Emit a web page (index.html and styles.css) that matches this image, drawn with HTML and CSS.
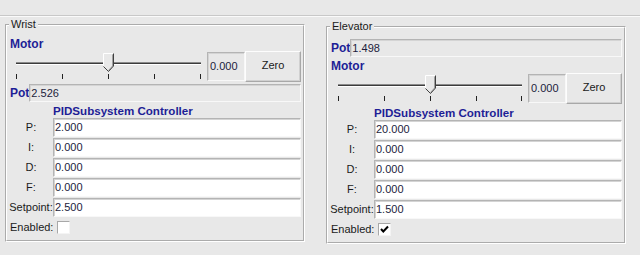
FILE: index.html
```html
<!DOCTYPE html>
<html>
<head>
<meta charset="utf-8">
<link rel="stylesheet" href="styles.css">
</head>
<body>
<div class="topbar"></div>
<div class="panels">
  <fieldset class="group">
    <legend>Wrist</legend>
    <div class="motor">Motor</div>
    <div class="slider-row">
      <svg class="slider" width="198" height="31" viewBox="0 0 198 31">
        <rect x="7" y="11" width="185" height="1" fill="#8a8a8a"/>
        <rect x="7" y="12" width="185" height="1" fill="#3c3c3c"/>
        <rect x="7" y="13" width="185" height="1" fill="#ffffff"/>
        <rect x="7" y="23" width="1" height="5" fill="#222"/>
        <rect x="53" y="23" width="1" height="5" fill="#222"/>
        <rect x="99" y="23" width="1" height="5" fill="#222"/>
        <rect x="145" y="23" width="1" height="5" fill="#222"/>
        <rect x="191" y="23" width="1" height="5" fill="#222"/>
        <polygon points="94.5,2.5 104.5,2.5 104.5,15 99.5,20.5 94.5,15" fill="#e8e8e8"/>
        <polyline points="94.5,15 94.5,2.5 104.5,2.5" fill="none" stroke="#ffffff" stroke-width="1"/>
        <polyline points="103.5,3.5 103.5,15 99.5,19.5" fill="none" stroke="#a0a0a0" stroke-width="1"/>
        <polyline points="104.5,2.5 104.5,15 99.5,20.5 94.5,15.5" fill="none" stroke="#404040" stroke-width="1"/>
      </svg>
      <div class="readout">0.000</div>
      <button class="zero-btn">Zero</button>
    </div>
    <div class="pot"><span class="pot-label">Pot</span><div class="field field-ro">2.526</div></div>
    <div class="pid-title">PIDSubsystem Controller</div>
    <div class="row"><span class="row-label">P:</span><div class="field">2.000</div></div>
    <div class="row"><span class="row-label">I:</span><div class="field">0.000</div></div>
    <div class="row"><span class="row-label">D:</span><div class="field">0.000</div></div>
    <div class="row"><span class="row-label">F:</span><div class="field">0.000</div></div>
    <div class="row"><span class="row-label">Setpoint:</span><div class="field">2.500</div></div>
    <div class="enabled"><span>Enabled:</span><span class="checkbox"></span></div>
  </fieldset>

  <fieldset class="group group-elevator">
    <legend>Elevator</legend>
    <div class="pot"><span class="pot-label">Pot</span><div class="field field-ro">1.498</div></div>
    <div class="motor">Motor</div>
    <div class="slider-row">
      <svg class="slider" width="198" height="31" viewBox="0 0 198 31">
        <rect x="8" y="11" width="184" height="1" fill="#8a8a8a"/>
        <rect x="8" y="12" width="184" height="1" fill="#3c3c3c"/>
        <rect x="8" y="13" width="184" height="1" fill="#ffffff"/>
        <rect x="8" y="23" width="1" height="5" fill="#222"/>
        <rect x="54" y="23" width="1" height="5" fill="#222"/>
        <rect x="100" y="23" width="1" height="5" fill="#222"/>
        <rect x="146" y="23" width="1" height="5" fill="#222"/>
        <rect x="191" y="23" width="1" height="5" fill="#222"/>
        <polygon points="95.5,2.5 105.5,2.5 105.5,15 100.5,20.5 95.5,15" fill="#e8e8e8"/>
        <polyline points="95.5,15 95.5,2.5 105.5,2.5" fill="none" stroke="#ffffff" stroke-width="1"/>
        <polyline points="104.5,3.5 104.5,15 100.5,19.5" fill="none" stroke="#a0a0a0" stroke-width="1"/>
        <polyline points="105.5,2.5 105.5,15 100.5,20.5 95.5,15.5" fill="none" stroke="#404040" stroke-width="1"/>
      </svg>
      <div class="readout">0.000</div>
      <button class="zero-btn">Zero</button>
    </div>
    <div class="pid-title">PIDSubsystem Controller</div>
    <div class="row"><span class="row-label">P:</span><div class="field">20.000</div></div>
    <div class="row"><span class="row-label">I:</span><div class="field">0.000</div></div>
    <div class="row"><span class="row-label">D:</span><div class="field">0.000</div></div>
    <div class="row"><span class="row-label">F:</span><div class="field">0.000</div></div>
    <div class="row"><span class="row-label">Setpoint:</span><div class="field">1.500</div></div>
    <div class="enabled"><span>Enabled:</span><span class="checkbox"><svg width="11" height="11" viewBox="0 0 11 11"><polyline points="2,5 4.3,7.5 9,2.5" fill="none" stroke="#000" stroke-width="2"/></svg></span></div>
  </fieldset>
</div>
</body>
</html>
```
FILE: styles.css
```css
html, body {
  margin: 0;
  padding: 0;
}
body {
  background: #e8e8e8;
  font-family: "Liberation Sans", Arial, sans-serif;
  font-size: 11px;
  line-height: 13px;
  color: #1a1a1a;
  width: 640px;
  height: 255px;
  overflow: hidden;
}
.topbar {
  height: 15px;
  border-bottom: 1px solid #c8c8c8;
  box-shadow: 0 1px 0 #fafafa;
}
.panels {
  display: flex;
  align-items: flex-start;
  gap: 21px;
  padding: 2px 0 0 5px;
}
.group {
  box-sizing: border-box;
  width: 300px;
  min-width: 0;
  margin: 0;
  padding: 6px 2px 4px 2px;
  border: 2px groove #ffffff;
}
.group-elevator {
  margin-top: 2px;
}
.group legend {
  padding: 0 2px;
  line-height: 13px;
  color: #1a1a1a;
}
.motor {
  height: 14px;
  line-height: 14px;
  padding-left: 1px;
  margin-top: 2px;
  font-size: 12px;
  font-weight: bold;
  color: #1e1e96;
}
.group legend + div {
  margin-top: 0;
}
.slider-row {
  display: flex;
  align-items: center;
  height: 31px;
}
.slider {
  flex: none;
  display: block;
}
.readout {
  box-sizing: border-box;
  width: 38px;
  height: 29px;
  border: 1px solid;
  border-color: #b4b4b4 #f8f8f8 #f8f8f8 #b4b4b4;
  box-shadow: inset 1px 1px 0 #d4d4d4;
  padding-left: 2px;
  line-height: 27px;
  color: #1c1c3c;
  background: #e8e8e8;
}
.zero-btn {
  flex: 1;
  box-sizing: border-box;
  height: 31px;
  margin: 0;
  padding: 0 0 2px 0;
  font: inherit;
  color: #1a1a1a;
  background: #e8e8e8;
  border: 1px solid;
  border-color: #fdfdfd #a8a8a8 #a8a8a8 #fdfdfd;
  box-shadow: inset -1px -1px 0 #d0d0d0;
  appearance: none;
}
.pot {
  display: flex;
  height: 18px;
  margin-top: 2px;
}
.pot-label {
  padding-left: 1px;
  line-height: 18px;
  font-size: 12px;
  font-weight: bold;
  color: #1e1e96;
}
.field {
  flex: 1;
  box-sizing: border-box;
  border: 1px solid;
  border-color: #b4b4b4 #f8f8f8 #f8f8f8 #b4b4b4;
  box-shadow: inset 1px 1px 0 #d4d4d4;
  background: #ffffff;
  padding-left: 1px;
  line-height: 17px;
  color: #1c1c3c;
}
.field-ro {
  background: #e8e8e8;
}
.pid-title {
  margin: 2px 0 0 44px;
  height: 13px;
  line-height: 13px;
  font-size: 11.6px;
  font-weight: bold;
  color: #1e1e96;
}
.row {
  display: flex;
  height: 19px;
  margin-top: 1px;
}
.row-label {
  width: 44px;
  flex: none;
  text-align: center;
  line-height: 19px;
}
.enabled {
  display: flex;
  align-items: center;
  gap: 4px;
  height: 18px;
  margin-top: 1px;
  padding-left: 1px;
}
.checkbox {
  box-sizing: border-box;
  width: 13px;
  height: 13px;
  border: 1px solid;
  border-color: #a8a8a8 #f4f4f4 #f4f4f4 #a8a8a8;
  background: #ffffff;
  display: flex;
}
.checkbox svg {
  display: block;
}
```
